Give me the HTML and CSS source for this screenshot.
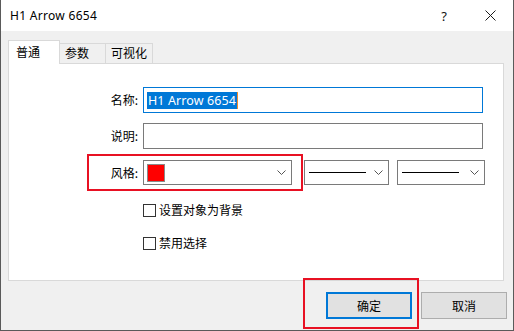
FILE: index.html
```html
<!DOCTYPE html>
<html>
<head>
<meta charset="utf-8">
<link rel="stylesheet" href="styles.css">
</head>
<body>
<div class="window">
  <div class="titlebar">
    <span class="title">H1 Arrow 6654</span>
    <span class="tbtn help">?</span>
    <span class="tbtn close"><svg width="11" height="11" viewBox="0 0 11 11"><path d="M0.5 0.5L10.5 10.5M10.5 0.5L0.5 10.5" stroke="#1a1a1a" stroke-width="1"/></svg></span>
  </div>
  <div class="client">
    <div class="tabs">
      <div class="tab active">普通</div>
      <div class="tab t2">参数</div>
      <div class="tab t3">可视化</div>
    </div>
    <div class="panel">
      <div class="row r-name">
        <span class="lbl">名称:</span>
        <div class="edit focused"><span class="sel">H1 Arrow 6654</span><span class="caret"></span></div>
      </div>
      <div class="row r-desc">
        <span class="lbl">说明:</span>
        <div class="edit"></div>
      </div>
      <div class="row r-style">
        <span class="lbl">风格:</span>
        <div class="combo c-color"><span class="swatch"></span><svg class="chev" width="9" height="5" viewBox="0 0 9 5"><path d="M0.5 0.5L4.5 4.5L8.5 0.5" fill="none" stroke="#555" stroke-width="1"/></svg></div>
        <div class="combo c-line"><span class="line"></span><svg class="chev" width="9" height="5" viewBox="0 0 9 5"><path d="M0.5 0.5L4.5 4.5L8.5 0.5" fill="none" stroke="#555" stroke-width="1"/></svg></div>
        <div class="combo c-line c-width"><span class="line"></span><svg class="chev" width="9" height="5" viewBox="0 0 9 5"><path d="M0.5 0.5L4.5 4.5L8.5 0.5" fill="none" stroke="#555" stroke-width="1"/></svg></div>
      </div>
      <div class="check c1"><span class="box"></span><span class="ctext">设置对象为背景</span></div>
      <div class="check c2"><span class="box"></span><span class="ctext">禁用选择</span></div>
    </div>
    <div class="footer">
      <button class="btn default">确定</button>
      <button class="btn">取消</button>
    </div>
  </div>
  <div class="mark mark-style"></div>
  <div class="mark mark-ok"></div>
</div>
</body>
</html>
```

FILE: styles.css
```css
html, body {
  margin: 0;
  padding: 0;
  background: #f0f0f0;
}
body {
  font-family: "Noto Sans", "Noto Sans CJK SC", sans-serif;
  font-size: 12px;
  color: #000;
}
.window {
  position: relative;
  width: 514px;
  height: 331px;
  box-sizing: border-box;
  border-left: 1px solid #5a5a5a;
  border-right: 1px solid #5a5a5a;
  border-bottom: 1px solid #5a5a5a;
  background: #f0f0f0;
  overflow: hidden;
}
.titlebar {
  height: 31px;
  background: #fff;
  display: flex;
  align-items: center;
}
.title {
  flex: 1;
  padding-left: 9px;
  font-size: 12px;
  line-height: 16px;
  padding-top: 1px;
  letter-spacing: 0.3px;
}
.tbtn {
  width: 46px;
  height: 31px;
  display: flex;
  align-items: center;
  justify-content: center;
}
.help {
  font-size: 13px;
  color: #111;
  padding-top: 1px;
}
.close svg { display: block; }
.client {
  padding: 9px 9px 0 7px;
}
.tabs {
  display: flex;
  align-items: flex-end;
  height: 23px;
  font-family: "Noto Sans CJK SC", sans-serif;
}
.tab {
  box-sizing: border-box;
  border: 1px solid #d9d9d9;
  border-bottom: none;
  height: 20px;
  line-height: 18px;
  background: #f0f0f0;
  padding-left: 5px;
}
.tab.active {
  position: relative;
  z-index: 1;
  height: 24px;
  margin-bottom: -1px;
  width: 52px;
  background: #fff;
  padding-left: 7px;
  line-height: 21px;
}
.t2 {
  width: 46px;
  border-left: none;
}
.t3 {
  width: 47px;
  border-left: none;
}
.panel {
  box-sizing: border-box;
  height: 218px;
  background: #fff;
  border: 1px solid #d9d9d9;
  padding-top: 23px;
  font-family: "Noto Sans", "Noto Sans CJK SC", sans-serif;
}
.row {
  display: flex;
  align-items: center;
}
.lbl {
  width: 129px;
  text-align: right;
  margin-right: 5px;
  font-family: "Noto Sans CJK SC", sans-serif;
  line-height: 16px;
}
.edit {
  box-sizing: border-box;
  width: 340px;
  height: 26px;
  border: 1px solid #7a7a7a;
  background: #fff;
  display: flex;
  align-items: center;
  padding-left: 3px;
}
.edit.focused {
  border-color: #0078d7;
}
.sel {
  background: #0078d7;
  color: #fff;
  font-size: 12.5px;
  line-height: 17px;
  height: 17px;
  padding: 0 1px;
  letter-spacing: 0.1px;
}
.caret {
  width: 1px;
  height: 17px;
  background: #f28c28;
}
.r-desc {
  margin-top: 10px;
}
.r-style {
  margin-top: 11px;
}
.combo {
  box-sizing: border-box;
  height: 25px;
  border: 1px solid #7a7a7a;
  background: #fff;
  display: flex;
  align-items: center;
}
.c-color {
  width: 149px;
  padding-left: 3px;
}
.swatch {
  box-sizing: border-box;
  width: 18px;
  height: 18px;
  background: #ff0000;
  border: 1px solid #8a8a8a;
}
.chev {
  display: block;
  margin-left: auto;
  margin-right: 5px;
}
.c-line {
  width: 85px;
  margin-left: 12px;
  padding-left: 4px;
}
.c-width {
  width: 88px;
  margin-left: 8px;
}
.line {
  width: 57px;
  height: 1px;
  background: #000;
}
.check {
  display: flex;
  align-items: center;
  margin-left: 134px;
  font-family: "Noto Sans CJK SC", sans-serif;
}
.c1 { margin-top: 17px; }
.c2 { margin-top: 17px; }
.box {
  box-sizing: border-box;
  width: 13px;
  height: 13px;
  border: 1px solid #333;
  background: #fff;
  margin-right: 3px;
}
.ctext {
  line-height: 16px;
}
.footer {
  display: flex;
  justify-content: flex-end;
  gap: 9px;
  margin-top: 11px;
  margin-right: -3px;
}
.btn {
  box-sizing: border-box;
  width: 86px;
  height: 27px;
  border: 1px solid #adadad;
  background: #e1e1e1;
  font-family: "Noto Sans CJK SC", sans-serif;
  font-size: 12px;
  padding: 0;
  color: #000;
  margin: 0;
}
.btn.default {
  border: 2px solid #0078d7;
}
.mark {
  position: absolute;
  box-sizing: border-box;
  border: 2px solid #e81123;
}
.mark-style {
  left: 86px;
  top: 154px;
  width: 216px;
  height: 37px;
}
.mark-ok {
  left: 302px;
  top: 278px;
  width: 116px;
  height: 51px;
}
```
